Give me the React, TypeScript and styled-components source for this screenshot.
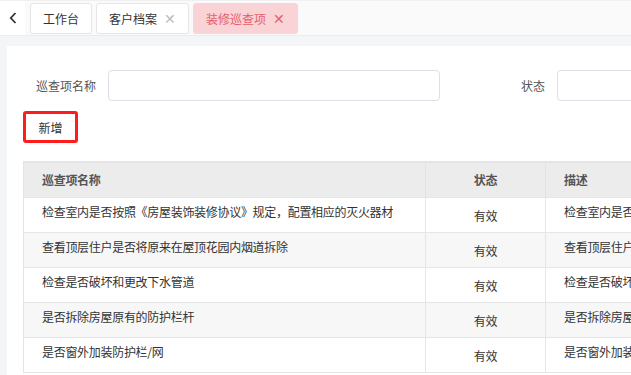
import React from 'react';
import styled, { createGlobalStyle } from 'styled-components';

const GlobalStyle = createGlobalStyle`
  html, body {
    margin: 0;
    padding: 0;
    overflow: hidden;
    background: #f4f5f7;
    font-family: "Noto Sans CJK SC", "Noto Sans", sans-serif;
    color: #333;
  }
`;

const Page = styled.div`
  width: 631px;
  height: 375px;
  overflow: hidden;
`;

const TopBar = styled.div`
  display: flex;
  height: 36px;
  background: #fff;
  border-top: 1px solid #f0f0f0;
  border-bottom: 1px solid #ececec;
  box-sizing: border-box;
`;

const BackButton = styled.div`
  width: 25px;
  display: flex;
  align-items: center;
  justify-content: center;
  background: #fff;
  color: #333;
`;

const TabStrip = styled.div`
  flex: 1;
  display: flex;
  align-items: center;
  gap: 4px;
  padding-left: 5px;
  background: #fafafa;
`;

const Tab = styled.div<{ $active?: boolean }>`
  height: 31px;
  display: flex;
  align-items: center;
  gap: 7px;
  padding: 0 12px;
  box-sizing: border-box;
  border-radius: 3px;
  font-size: 12px;
  border: 1px solid ${(p) => (p.$active ? '#fad3d7' : '#e6e6e6')};
  background: ${(p) => (p.$active ? '#fad3d7' : '#fff')};
  color: ${(p) => (p.$active ? '#e4606c' : '#333')};
`;

const Close = styled.span<{ $active?: boolean }>`
  font-size: 14px;
  line-height: 1;
  color: ${(p) => (p.$active ? '#e4606c' : '#bbb')};
`;

const Body = styled.div`
  padding: 10px 0 0 7px;
`;

const Panel = styled.div`
  background: #fff;
  padding: 24px 0 0 16px;
  height: 340px;
  box-sizing: border-box;
`;

const FormRow = styled.div`
  display: flex;
  align-items: center;
  gap: 32px;
  white-space: nowrap;
`;

const FormItem = styled.div`
  display: flex;
  align-items: center;
  gap: 12px;
`;

const Label = styled.label`
  width: 73px;
  text-align: right;
  font-size: 12px;
  color: #555;
`;

const Input = styled.div<{ $width: number }>`
  width: ${(p) => p.$width}px;
  height: 31px;
  border: 1px solid #dcdfe6;
  border-radius: 4px;
  box-sizing: border-box;
  flex-shrink: 0;
`;

const AddButton = styled.button`
  margin-top: 10px;
  width: 55px;
  height: 32px;
  border: 3px solid #ff1c1c;
  border-radius: 3px;
  background: #fff;
  font-family: inherit;
  font-size: 12px;
  color: #333;
  padding: 0;
`;

const Table = styled.table`
  margin-top: 18px;
  border-collapse: collapse;
  table-layout: fixed;
  width: 802px;
  font-size: 12px;
  letter-spacing: -0.3px;
  border: 1px solid #e4e4e4;
  border-top: 2px solid #e4e4e4;
`;

const Th = styled.th<{ $center?: boolean }>`
  height: 35px;
  box-sizing: border-box;
  background: #ececec;
  font-weight: 600;
  color: #555;
  text-align: ${(p) => (p.$center ? 'center' : 'left')};
  padding: 0 18px;
  border-right: 1px solid #e2e2e2;
`;

const Td = styled.td<{ $center?: boolean }>`
  height: 35px;
  box-sizing: border-box;
  padding: ${(p) => (p.$center ? '2px 18px 0' : '0 18px 6px')};
  border-top: 1px solid #e6e6e6;
  border-right: 1px solid #e6e6e6;
  text-align: ${(p) => (p.$center ? 'center' : 'left')};
  vertical-align: middle;
  white-space: nowrap;
  overflow: hidden;
  line-height: 16px;
  color: #333;
`;

const Tr = styled.tr<{ $striped?: boolean }>`
  background: ${(p) => (p.$striped ? '#f7f7f7' : '#fff')};
`;

const rows = [
  '检查室内是否按照《房屋装饰装修协议》规定，配置相应的灭火器材',
  '查看顶层住户是否将原来在屋顶花园内烟道拆除',
  '检查是否破坏和更改下水管道',
  '是否拆除房屋原有的防护栏杆',
  '是否窗外加装防护栏/网',
];

export default function App() {
  return (
    <Page>
      <GlobalStyle />
      <TopBar>
        <BackButton>
          <svg width="8" height="12" viewBox="0 0 8 12">
            <path d="M6.5 1 L1.8 6 L6.5 11" fill="none" stroke="#333" strokeWidth="1.8" />
          </svg>
        </BackButton>
        <TabStrip>
          <Tab>工作台</Tab>
          <Tab>
            客户档案<Close>✕</Close>
          </Tab>
          <Tab $active>
            装修巡查项<Close $active>✕</Close>
          </Tab>
        </TabStrip>
      </TopBar>
      <Body>
        <Panel>
          <FormRow>
            <FormItem>
              <Label>巡查项名称</Label>
              <Input $width={332} />
            </FormItem>
            <FormItem>
              <Label>状态</Label>
              <Input $width={200} />
            </FormItem>
          </FormRow>
          <AddButton>新增</AddButton>
          <Table>
            <colgroup>
              <col style={{ width: 402 }} />
              <col style={{ width: 120 }} />
              <col style={{ width: 280 }} />
            </colgroup>
            <thead>
              <tr>
                <Th>巡查项名称</Th>
                <Th $center>状态</Th>
                <Th>描述</Th>
              </tr>
            </thead>
            <tbody>
              {rows.map((r, i) => (
                <Tr key={r} $striped={i % 2 === 1}>
                  <Td>{r}</Td>
                  <Td $center>有效</Td>
                  <Td>{r}</Td>
                </Tr>
              ))}
            </tbody>
          </Table>
        </Panel>
      </Body>
    </Page>
  );
}
